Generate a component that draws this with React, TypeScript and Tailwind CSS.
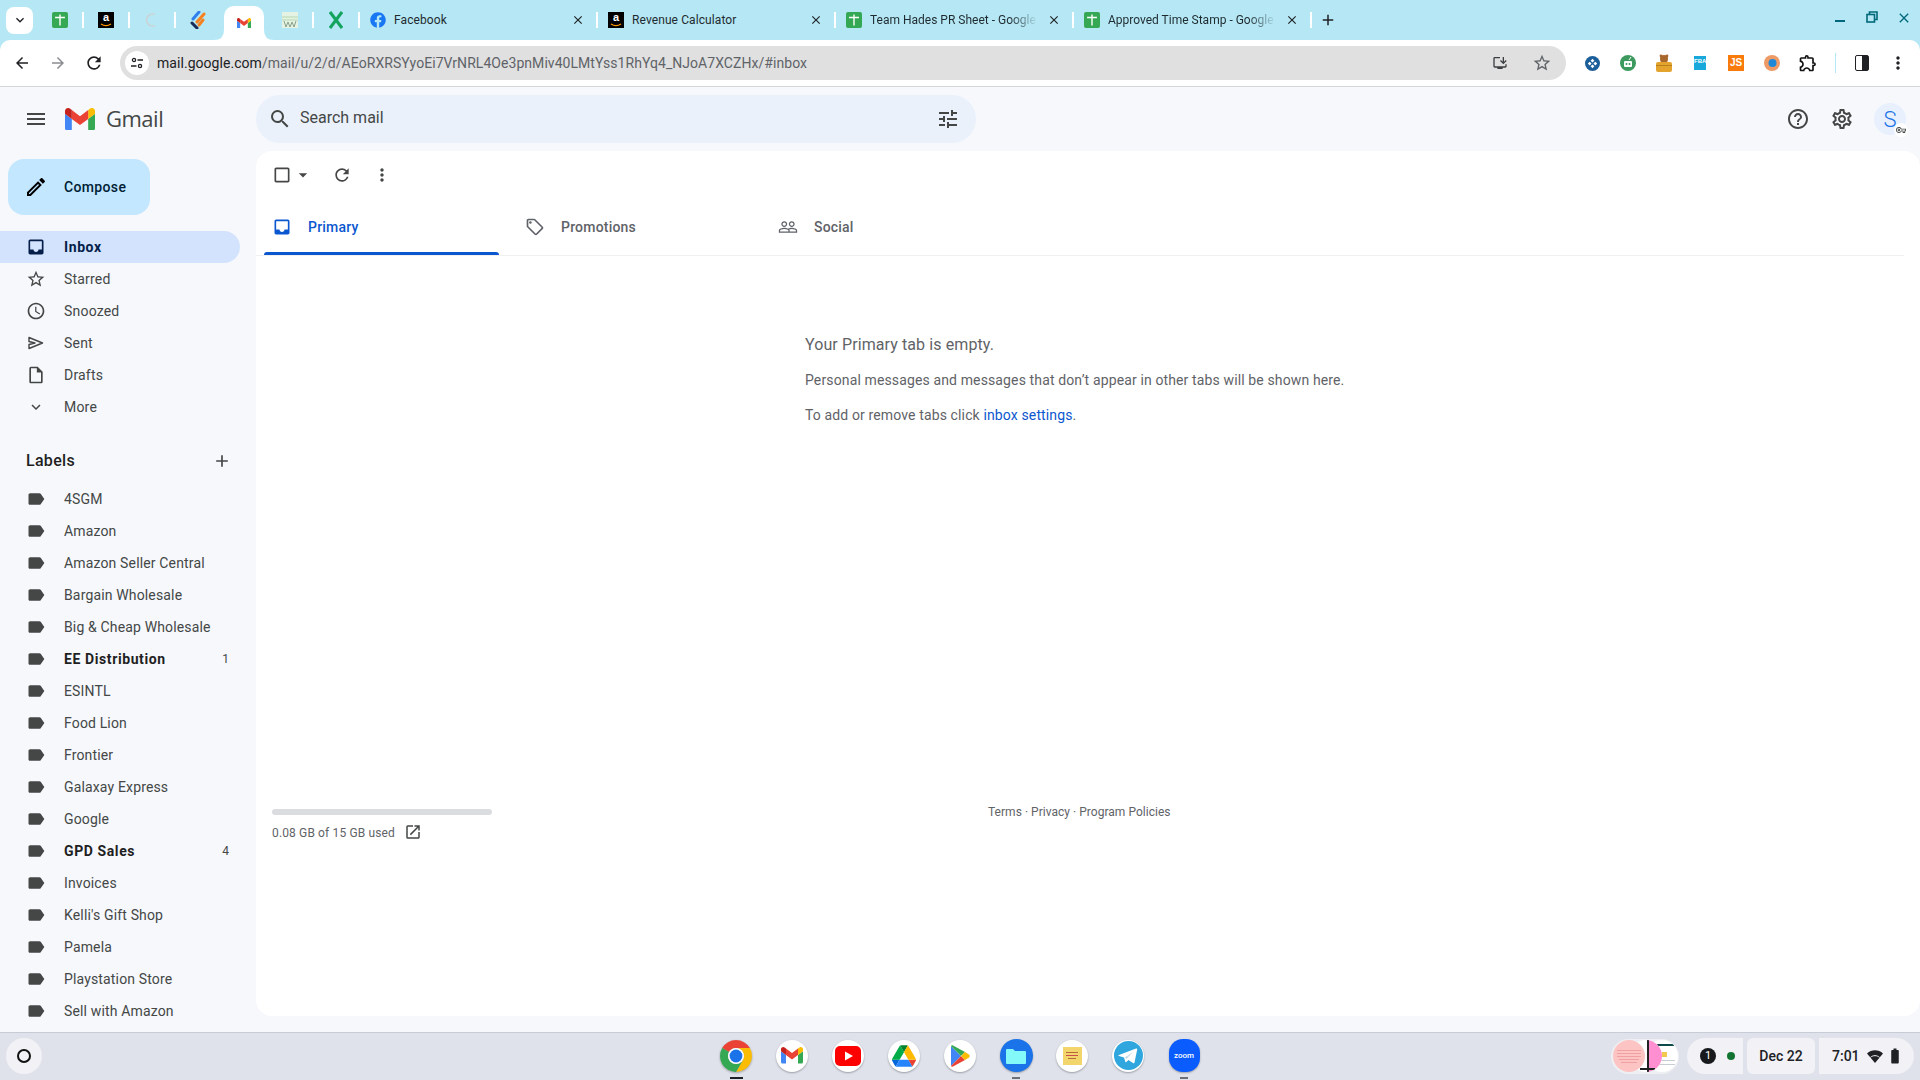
import React from "react";
import {
  MdInbox, MdStarBorder, MdOutlineWatchLater, MdOutlineInsertDriveFile, MdKeyboardArrowDown, MdLabel, MdAdd,
  MdOutlineLocalOffer, MdPeopleOutline, MdCheckBoxOutlineBlank, MdArrowDropDown, MdRefresh, MdMoreVert, MdOpenInNew,
  MdOutlineHelpOutline, MdOutlineSettings, MdSearch, MdTune, MdMenu, MdOutlineEdit, MdArrowBack, MdArrowForward,
  MdClose, MdOutlineExtension, MdOutlineInstallDesktop, MdExpandMore, MdBatteryFull, MdOutlineVpnKey,
} from "react-icons/md";
import { FaFacebook } from "react-icons/fa";

const GmailM = ({ w = 30 }: { w?: number }) => (
  <svg width={w} viewBox="52 42 88 66">
    <path fill="#4285f4" d="M58 108h14V74L52 59v43c0 3.32 2.69 6 6 6" />
    <path fill="#34a853" d="M120 108h14c3.32 0 6-2.69 6-6V59l-20 15" />
    <path fill="#fbbc04" d="M120 48v26l20-15v-8c0-7.42-8.47-11.65-14.4-7.2" />
    <path fill="#ea4335" d="M72 74V48l24 18 24-18v26L96 92" />
    <path fill="#c5221f" d="M52 51v8l20 15V48l-5.6-4.2c-5.94-4.45-14.4-.22-14.4 7.2" />
  </svg>
);

const Sheets = () => (
  <div className="w-4 h-4 rounded-[2px] bg-[#34a853] flex items-center justify-center">
    <svg width="16" height="16" viewBox="0 0 16 16"><path d="M3 5.5h10M8 2.5v11" stroke="#fff" strokeWidth="1.4" /></svg>
  </div>
);

const Amazon = () => (
  <div className="w-4 h-4 bg-black flex flex-col items-center justify-start">
    <span className="text-white text-[11px] leading-[11px] font-bold font-['Liberation_Sans',sans-serif]">a</span>
    <svg width="12" height="4" viewBox="0 0 12 4"><path d="M1 1c3 2 7 2 10 0" stroke="#f90" strokeWidth="1.3" fill="none" /></svg>
  </div>
);

const Sep = ({ hidden }: { hidden?: boolean }) => (
  <div className={`w-[2px] h-4 shrink-0 ${hidden ? "bg-transparent" : "bg-white"}`} />
);

const Pinned = ({ children }: { children: React.ReactNode }) => (
  <div className="w-[44px] h-full shrink-0 flex items-center justify-center">{children}</div>
);

const Tab = ({ icon, title, fade }: { icon: React.ReactNode; title: string; fade?: boolean }) => (
  <div className="w-[236px] shrink-0 h-full flex items-center pl-[10px] pr-[11px]">
    <div className="w-4 shrink-0 flex justify-center">{icon}</div>
    <div
      className={`ml-2 flex-1 min-w-0 whitespace-nowrap text-[12px] text-[#1f2a30] ${
        fade ? "tracking-[0px] [mask-image:linear-gradient(to_right,black_80%,transparent_96%)]" : "tracking-[0.1px]"
      }`}
    >
      {title}
    </div>
    <MdClose className="ml-[2px] shrink-0 text-[#202124]" size={14} />
  </div>
);

const TabStrip = () => (
  <div className="h-10 shrink-0 bg-[#b5e8f4] flex items-center pl-[6px]">
    <div className="w-[27px] h-[27px] mr-[5px] shrink-0 bg-white rounded-lg flex items-center justify-center">
      <MdExpandMore size={16} className="text-[#202124]" />
    </div>
    <Pinned><Sheets /></Pinned>
    <Sep />
    <Pinned><Amazon /></Pinned>
    <Sep />
    <Pinned>
      <svg width="16" height="16" viewBox="0 0 16 16"><path d="M11 2.5a6 6 0 1 0 0 11" stroke="#c9d4d8" strokeWidth="1.6" fill="none" /></svg>
    </Pinned>
    <Sep />
    <Pinned>
      <svg width="16" height="18" viewBox="0 0 16 18">
        <path d="M9 1 3 8" stroke="#2f80ed" strokeWidth="3" strokeLinecap="round" />
        <path d="M14 3 7 11" stroke="#f58220" strokeWidth="3" strokeLinecap="round" />
        <path d="M13 9l-4 5" stroke="#f58220" strokeWidth="3" strokeLinecap="round" />
        <path d="M2 12l5 5" stroke="#172b5a" strokeWidth="3" strokeLinecap="round" />
      </svg>
    </Pinned>
    <Sep hidden />
    <Pinned>
      <div className="relative w-10 h-[34px] self-end bg-white rounded-t-[10px] flex items-center justify-center">
        <GmailM w={14} />
        <svg className="absolute bottom-0 -left-[10px]" width="10" height="10" viewBox="0 0 10 10"><path d="M10 0Q10 10 0 10H10Z" fill="#fff" /></svg>
        <svg className="absolute bottom-0 -right-[10px]" width="10" height="10" viewBox="0 0 10 10"><path d="M0 0Q0 10 10 10H0Z" fill="#fff" /></svg>
      </div>
    </Pinned>
    <Sep hidden />
    <Pinned>
      <svg width="16" height="18" viewBox="0 0 16 18">
        <rect x="0" y="1" width="16" height="16" fill="#e4f3e4" />
        <path d="M0 6h16M0 9h16" stroke="#b7d8b0" strokeWidth="1" />
        <path d="M2 10l2 6 2-5 2 5 2-5 2 5 2-6" stroke="#8aa08a" strokeWidth="1" fill="none" />
      </svg>
    </Pinned>
    <Sep />
    <Pinned>
      <svg width="14" height="18" viewBox="0 0 14 18"><path d="M1 1l12 16M13 1 1 17" stroke="#12a35c" strokeWidth="3" /></svg>
    </Pinned>
    <Sep />
    <Tab icon={<FaFacebook size={16} className="text-[#1877f2]" />} title="Facebook" />
    <Sep />
    <Tab icon={<Amazon />} title="Revenue Calculator" />
    <Sep />
    <Tab icon={<Sheets />} title="Team Hades PR Sheet - Google" fade />
    <Sep />
    <Tab icon={<Sheets />} title="Approved Time Stamp - Google" fade />
    <Sep />
    <MdAdd size={18} className="ml-[7px] text-[#202124]" />
    <div className="ml-auto flex items-start h-full pt-[10px] text-[#00687a]">
      <div className="w-8 h-3 flex items-end justify-center"><div className="w-[10px] h-[2px] bg-[#00687a]" /></div>
      <div className="w-8 h-5 flex items-start justify-center">
        <svg width="12" height="12" viewBox="0 0 12 12" className="mt-[1px]"><path d="M3.5 3.5V1H11v7.5H8.5" stroke="#00687a" strokeWidth="1.6" fill="none" /><rect x="1" y="3.5" width="7.5" height="7.5" stroke="#00687a" strokeWidth="1.6" fill="none" /></svg>
      </div>
      <div className="w-8 h-5 flex items-start justify-center"><MdClose size={16} /></div>
    </div>
  </div>
);

const ToolBtn = ({ children }: { children: React.ReactNode }) => (
  <div className="w-9 h-9 shrink-0 flex items-center justify-center">{children}</div>
);

const BrowserBar = () => (
  <div className="h-[47px] shrink-0 bg-[#b5e8f4]">
    <div className="h-full bg-white rounded-t-[10px] border-b border-[#d4d6d8] flex items-center pl-1 text-[#202124]">
      <ToolBtn><MdArrowBack size={18} /></ToolBtn>
      <ToolBtn><MdArrowForward size={18} className="text-[#8a8d91]" /></ToolBtn>
      <ToolBtn><MdRefresh size={20} /></ToolBtn>
      <div className="ml-2 w-[1446px] shrink-0 h-[34px] bg-[#e0e0e0] rounded-full flex items-center pl-[5px] pr-[14px]">
        <div className="w-6 h-6 bg-white rounded-full flex items-center justify-center">
          <svg width="14" height="14" viewBox="0 0 14 14" fill="none" stroke="#202124" strokeWidth="1.3">
            <circle cx="4" cy="4" r="1.6" /><path d="M7.5 4H13M1 10h5.5" /><circle cx="10" cy="10" r="1.6" />
          </svg>
        </div>
        <div className="ml-2 flex-1 text-[14px] tracking-[0.05px] whitespace-nowrap text-[#5f6368]">
          <span className="text-[#202124]">mail.google.com</span>/mail/u/2/d/AEoRXRSYyoEi7VrNRL4Oe3pnMiv40LMtYss1RhYq4_NJoA7XCZHx/#inbox
        </div>
        <MdOutlineInstallDesktop size={16} className="text-[#3c4043] mr-[24px]" />
        <MdStarBorder size={20} className="text-[#5f6368]" />
      </div>
      <div className="ml-2 flex">
        <ToolBtn>
          <svg width="15" height="15" viewBox="0 0 16 16"><circle cx="8" cy="8" r="8" fill="#1b5e9a" /><path d="M8 3l2 2-2 2-2-2zM8 9l2 2-2 2-2-2zM3 8l2-2 2 2-2 2zM9 8l2-2 2 2-2 2z" fill="#fff" /></svg>
        </ToolBtn>
        <ToolBtn>
          <svg width="16" height="18" viewBox="0 0 16 18"><circle cx="8" cy="9" r="8" fill="#3c9a5f" /><rect x="4" y="7" width="8" height="6" rx="1" fill="#fff" /><circle cx="6.5" cy="10" r="1" fill="#3c9a5f" /><circle cx="9.5" cy="10" r="1" fill="#3c9a5f" /><path d="M9 6l2-3" stroke="#fff" strokeWidth="1" /></svg>
        </ToolBtn>
        <ToolBtn>
          <svg width="16" height="18" viewBox="0 0 16 18"><circle cx="8" cy="5" r="4" fill="#a8672c" /><circle cx="5" cy="2" r="1.4" fill="#a8672c" /><circle cx="11" cy="2" r="1.4" fill="#a8672c" /><rect x="0" y="8" width="16" height="10" rx="2" fill="#e3a32d" /><rect x="0" y="11" width="16" height="1" fill="#b97f1a" /></svg>
        </ToolBtn>
        <ToolBtn>
          <div className="w-3 h-[14px] bg-[#18a8dc] text-white text-[6px] leading-[10px] font-bold text-center font-['Liberation_Sans',sans-serif]">FBA</div>
        </ToolBtn>
        <ToolBtn>
          <div className="w-4 h-4 bg-[#f97b0c] text-white text-[10px] leading-4 font-bold text-center font-['Liberation_Sans',sans-serif]">JS</div>
        </ToolBtn>
        <ToolBtn>
          <svg width="16" height="16" viewBox="0 0 16 16"><circle cx="8" cy="8" r="8" fill="#ee9a66" /><circle cx="8.5" cy="8" r="4" fill="#1e88d8" /></svg>
        </ToolBtn>
        <ToolBtn><MdOutlineExtension size={20} className="text-[#111]" /></ToolBtn>
      </div>
      <div className="ml-[9px] w-px h-5 bg-[#b5e8f4]" />
      <div className="ml-2 flex">
        <ToolBtn>
          <div className="w-[14px] h-4 rounded-[2px] border-[1.5px] border-[#202124] flex justify-end"><div className="w-[6px] h-full bg-[#202124]" /></div>
        </ToolBtn>
        <ToolBtn><MdMoreVert size={20} /></ToolBtn>
      </div>
    </div>
  </div>
);

const GmailHeader = () => (
  <div className="h-16 shrink-0 flex items-center">
    <div className="w-[256px] shrink-0 flex items-center pl-6">
      <MdMenu size={24} className="text-[#444746]" />
      <div className="ml-[17px] flex"><GmailM w={30} /></div>
      <span className="ml-[11px] -mt-[2px] text-[22px] text-[#444746] font-['Open_Sans',sans-serif] tracking-[-0.5px]">Gmail</span>
    </div>
    <div className="w-[720px] h-12 rounded-full bg-[#eaf1fb] flex items-center pl-[12px] pr-[16px] text-[#444746]">
      <MdSearch size={24} />
      <span className="ml-2 flex-1 text-[16px] -mt-[2px]">Search mail</span>
      <MdTune size={24} />
    </div>
    <div className="ml-auto pr-[14px] flex items-center text-[#444746]">
      <MdOutlineHelpOutline size={24} />
      <MdOutlineSettings size={24} className="ml-5" />
      <div className="relative ml-5 w-8 h-8 rounded-full bg-[#e8f0fe] flex items-center justify-center text-[#1a73e8] text-[22px] font-light">
        S
        <div className="absolute -right-[2px] -bottom-[2px] w-[14px] h-[14px] rounded-full bg-white flex items-center justify-center">
          <MdOutlineVpnKey size={10} className="text-[#444746]" />
        </div>
      </div>
    </div>
  </div>
);

const NavRow = ({ icon, label, active }: { icon: React.ReactNode; label: string; active?: boolean }) => (
  <div className={`h-8 w-[240px] rounded-r-full flex items-center pl-[26px] text-[14px] ${active ? "bg-[#d3e3fd] font-bold text-[#041e49]" : "text-[#444746]"}`}>
    <div className="w-5 flex justify-center shrink-0">{icon}</div>
    <span className={`ml-[18px] ${active ? "tracking-[0.6px]" : "tracking-[0.2px]"}`}>{label}</span>
  </div>
);

const labels: [string, string?][] = [
  ["4SGM"], ["Amazon"], ["Amazon Seller Central"], ["Bargain Wholesale"], ["Big & Cheap Wholesale"], ["EE Distribution", "1"],
  ["ESINTL"], ["Food Lion"], ["Frontier"], ["Galaxay Express"], ["Google"], ["GPD Sales", "4"], ["Invoices"], ["Kelli's Gift Shop"],
  ["Pamela"], ["Playstation Store"], ["Sell with Amazon"],
];

const Sidebar = () => (
  <div className="w-[256px] shrink-0 overflow-hidden pt-2 h-full">
    <div className="ml-2 w-[142px] h-14 rounded-2xl bg-[#c2e7ff] flex items-center pl-4 text-[#001d35]">
      <MdOutlineEdit size={24} className="text-black" />
      <span className="ml-4 text-[14px] font-medium tracking-[0.35px]">Compose</span>
    </div>
    <div className="mt-4">
      <NavRow active icon={<MdInbox size={20} className="text-[#041e49]" />} label="Inbox" />
      <NavRow icon={<MdStarBorder size={20} />} label="Starred" />
      <NavRow icon={<MdOutlineWatchLater size={20} />} label="Snoozed" />
      <NavRow
        icon={<svg width="16" height="14" viewBox="0 0 16 14" fill="none" stroke="#444746" strokeWidth="1.4"><path d="M1 1.5 14.5 7 1 12.5V8.5L7 7 1 5.5z" strokeLinejoin="round" /></svg>}
        label="Sent"
      />
      <NavRow icon={<MdOutlineInsertDriveFile size={20} />} label="Drafts" />
      <NavRow icon={<MdKeyboardArrowDown size={18} />} label="More" />
    </div>
    <div className="mt-[19px] mb-[3px] h-[38px] pl-[26px] pr-[24px] flex items-center justify-between text-[#1f1f1f]">
      <span className="text-[16px] font-medium tracking-[0.3px]">Labels</span>
      <MdAdd size={20} className="text-[#444746]" />
    </div>
    <div>
      {labels.map(([l, c]) => (
        <div key={l} className="h-8 w-[240px] flex items-center pl-[26px] pr-[11px] text-[14px] text-[#444746]">
          <MdLabel size={20} className="shrink-0" />
          <span className={`ml-[18px] ${c ? "font-bold text-[#1f1f1f] tracking-[0.6px]" : "tracking-[0.15px]"}`}>{l}</span>
          {c && <span className="ml-auto text-[12px] text-[#444746]">{c}</span>}
        </div>
      ))}
    </div>
  </div>
);

const TabHead = ({ icon, label, active }: { icon: React.ReactNode; label: string; active?: boolean }) => (
  <div className={`relative w-[253px] h-full flex items-center pl-2 text-[14px] font-medium ${active ? "text-[#0b57d0]" : "text-[#5f6368]"}`}>
    <div className="w-5 flex justify-center">{icon}</div>
    <span className="ml-4 tracking-[0.2px]">{label}</span>
    {active && <div className="absolute left-0 bottom-0 w-[235px] h-[3px] bg-[#0b57d0] rounded-t-[3px]" />}
  </div>
);

const Main = () => (
  <div className="flex-1 min-w-0 h-[865px] bg-white rounded-2xl flex flex-col">
    <div className="h-12 shrink-0 flex items-center pl-4 text-[#444746]">
      <MdCheckBoxOutlineBlank size={20} />
      <MdArrowDropDown size={20} className="ml-[1px]" />
      <MdRefresh size={20} className="ml-[19px]" />
      <MdMoreVert size={20} className="ml-[20px]" />
    </div>
    <div className="h-[57px] shrink-0 pl-2 flex border-b border-[#f0f0f0] mr-[16px]">
      <TabHead active icon={<MdInbox size={20} />} label="Primary" />
      <TabHead icon={<MdOutlineLocalOffer size={20} />} label="Promotions" />
      <TabHead icon={<MdPeopleOutline size={20} />} label="Social" />
    </div>
    <div className="flex-1 flex flex-col">
      <div className="pl-[549px] pt-[77px] text-[#5f6368]">
        <div className="text-[16px] leading-6 tracking-[0.1px]">Your Primary tab is empty.</div>
        <div className="mt-[11px] text-[14px] leading-6 tracking-[0.13px]">Personal messages and messages that don’t appear in other tabs will be shown here.</div>
        <div className="mt-[11px] text-[14px] leading-6 tracking-[0.13px]">
          To add or remove tabs click <span className="text-[#0b57d0]">inbox settings</span>.
        </div>
      </div>
      <div className="mt-[382px] flex items-start pl-4">
        <div className="w-[220px] shrink-0">
          <div className="h-[6px] rounded-full bg-[#dadce0]" />
          <div className="mt-[9px] flex items-center text-[12px] text-[#5f6368] leading-[18px] tracking-[0.14px]">
            0.08 GB of 15 GB used
            <MdOpenInNew size={18} className="ml-[9px] -mt-[2px] text-[#444746]" />
          </div>
        </div>
        <div className="ml-[496px] -mt-[6px] text-[12px] leading-[18px] tracking-[0.03px] text-[#5f6368]">Terms · Privacy · Program Policies</div>
      </div>
    </div>
  </div>
);

const DockCircle = ({ children, bar }: { children: React.ReactNode; bar?: "dark" | "gray" }) => (
  <div className="relative w-[56px] h-full shrink-0 flex items-center justify-center pb-[2px]">
    {children}
    {bar && <div className={`absolute bottom-[1px] h-[2px] ${bar === "dark" ? "w-[13px] bg-[#202124]" : "w-2 bg-[#6b6f78]"}`} />}
  </div>
);

const White = ({ children }: { children: React.ReactNode }) => (
  <div className="w-8 h-8 rounded-full bg-white shadow-[0_1px_2px_rgba(0,0,0,0.3)] flex items-center justify-center">{children}</div>
);

const Shelf = () => (
  <div className="h-12 shrink-0 bg-[#dfe2eb] border-t border-[#c8ccd6] flex items-center relative">
    <div className="ml-[6px] mb-[1px] w-9 h-9 rounded-full bg-[#f1f1f6] flex items-center justify-center">
      <div className="w-[14px] h-[14px] rounded-full border-2 border-[#111]" />
    </div>
    <div className="ml-[666px] flex h-full">
      <DockCircle bar="dark">
        <svg width="32" height="32" viewBox="4 4 40 40" className="drop-shadow-[0_1px_1px_rgba(0,0,0,0.3)]">
          <path fill="#EA4335" d="M6.68 14A20 20 0 0 1 41.32 14H24A10 10 0 0 0 15.34 19Z" />
          <path fill="#FBBC04" d="M41.32 14A20 20 0 0 1 24 44L32.66 29A10 10 0 0 0 24 14Z" />
          <path fill="#34A853" d="M6.68 14A20 20 0 0 0 24 44L32.66 29A10 10 0 0 1 15.34 19Z" />
          <circle cx="24" cy="24" r="10" fill="#fff" /><circle cx="24" cy="24" r="8" fill="#1a73e8" />
        </svg>
      </DockCircle>
      <DockCircle><White><GmailM w={22} /></White></DockCircle>
      <DockCircle>
        <White>
          <svg width="26" height="20" viewBox="0 0 26 20"><rect width="26" height="20" rx="5" fill="#f00" /><path d="M10 5.5 18 10l-8 4.5z" fill="#fff" /></svg>
        </White>
      </DockCircle>
      <DockCircle>
        <White>
          <svg width="24" height="22" viewBox="0 0 87.3 78">
            <path d="m6.6 66.85 3.85 6.65c.8 1.4 1.95 2.5 3.3 3.3l13.75-23.8h-27.5c0 1.55.4 3.1 1.2 4.5z" fill="#0066da" />
            <path d="m43.65 25-13.75-23.8c-1.35.8-2.5 1.9-3.3 3.3l-25.4 44a9.06 9.06 0 0 0 -1.2 4.5h27.5z" fill="#00ac47" />
            <path d="m73.55 76.8c1.35-.8 2.5-1.9 3.3-3.3l1.6-2.75 7.65-13.25c.8-1.4 1.2-2.95 1.2-4.5h-27.502l5.852 11.5z" fill="#ea4335" />
            <path d="m43.65 25 13.75-23.8c-1.35-.8-2.9-1.2-4.5-1.2h-18.5c-1.6 0-3.15.45-4.5 1.2z" fill="#00832d" />
            <path d="m59.8 53h-32.3l-13.75 23.8c1.35.8 2.9 1.2 4.5 1.2h50.8c1.6 0 3.15-.45 4.5-1.2z" fill="#2684fc" />
            <path d="m73.4 26.5-12.7-22c-.8-1.4-1.95-2.5-3.3-3.3l-13.75 23.8 16.15 28h27.45c0-1.55-.4-3.1-1.2-4.5z" fill="#ffba00" />
          </svg>
        </White>
      </DockCircle>
      <DockCircle>
        <White>
          <svg width="20" height="22" viewBox="0 0 20 22">
            <path d="M1 1v20l10-10z" fill="#4285f4" />
            <path d="M1 1l10 10 4-4L3 .5C2 0 1.4.3 1 1z" fill="#34a853" />
            <path d="M1 21l10-10 4 4L3 21.5c-1 .5-1.6.2-2-.5z" fill="#ea4335" />
            <path d="M15 7l4 2.5c1 .7 1 2.3 0 3L15 15l-4-4z" fill="#fbbc04" />
          </svg>
        </White>
      </DockCircle>
      <DockCircle bar="gray">
        <div className="w-[33px] h-[33px] rounded-full bg-[#1a73e8] flex items-center justify-center shadow-[0_1px_2px_rgba(0,0,0,0.3)]">
          <svg width="20" height="16" viewBox="0 0 20 16"><path d="M0 2a1 1 0 0 1 1-1h6l2 2h10a1 1 0 0 1 1 1v11a1 1 0 0 1-1 1H1a1 1 0 0 1-1-1z" fill="#84f9f9" /></svg>
        </div>
      </DockCircle>
      <DockCircle>
        <White>
          <div className="w-[19px] h-[18px] bg-[#f3d66b] flex flex-col items-center justify-center gap-[2px]">
            <div className="w-3 h-px bg-[#b56a3a]" /><div className="w-3 h-px bg-[#c94f4f]" /><div className="w-2 h-px bg-[#b56a3a]" />
          </div>
        </White>
      </DockCircle>
      <DockCircle>
        <White>
          <div className="w-[29px] h-[29px] rounded-full bg-[#2fa6de] flex items-center justify-center">
            <svg width="20" height="18" viewBox="0 0 20 18"><path d="M1 8 18 1.5c.8-.3 1.4.2 1.2 1L16.5 15.5c-.2.9-.9 1-1.6.6L10.5 13l-2.2 2.1c-.4.4-.8.3-.9-.2L6 10.5 1 9c-.9-.3-.9-.8 0-1z" fill="#fff" /><path d="M6.8 10.6 15 5l-6.5 7z" fill="#c8daea" /></svg>
          </div>
        </White>
      </DockCircle>
      <DockCircle bar="gray">
        <div className="w-[31px] h-[33px] rounded-[14px] bg-[#0b5cff] flex items-center justify-center text-white text-[8px] font-medium shadow-[0_1px_2px_rgba(0,0,0,0.3)]">zoom</div>
      </DockCircle>
    </div>
    <div className="ml-auto mb-[1px] flex items-center h-[36px] pr-[6px] text-[#202124]">
      <div className="w-[68px] h-[35px] rounded-full bg-[#eeeff3] relative overflow-hidden flex items-center pl-[1px]">
        <div className="absolute right-[1px] w-8 h-8 rounded-full bg-white flex flex-col items-end justify-center gap-[3px] pr-[3px] overflow-hidden">
          <div className="w-5 h-[2px] bg-[#0f4a4a] -mt-[4px] mb-[3px]" /><div className="w-[5px] h-[5px] bg-[#f2c94c] mr-2" /><div className="w-4 h-[1px] bg-[#c8ccd4]" /><div className="w-4 h-[1px] bg-[#c8ccd4]" />
        </div>
        <div className="absolute left-[19px] w-8 h-8 rounded-full bg-white overflow-hidden">
          <div className="absolute left-[17px] top-0 w-[15px] h-full bg-[#ff8fd0]" />
          <div className="absolute left-[17px] top-0 w-[2px] h-full bg-[#222]" />
          <div className="absolute left-[10px] top-[28px] w-[15px] h-[2px] bg-[#222]" />
        </div>
        <div className="relative ml-[1px] w-8 h-8 rounded-full bg-[#fdc4c4] flex flex-col items-center justify-center gap-[2px]">
          <div className="w-6 h-px bg-[#f0a0a0]" /><div className="w-6 h-px bg-[#f0a0a0]" /><div className="w-6 h-px bg-[#f0a0a0]" /><div className="w-5 h-px bg-[#f0a0a0]" /><div className="w-4 h-px bg-[#f0a0a0]" />
        </div>
      </div>
      <div className="ml-2 w-[56px] h-full rounded-l-full rounded-r-[6px] bg-[#f1f1f6] flex items-center pl-[13px]">
        <div className="w-4 h-4 rounded-full bg-[#17191c] text-white text-[11px] leading-4 text-center">1</div>
        <div className="ml-[11px] w-2 h-2 rounded-full bg-[#137333]" />
      </div>
      <div className="ml-1 w-[68px] h-full rounded-[6px] bg-[#f1f1f6] flex items-center justify-center text-[14px] font-medium">Dec 22</div>
      <div className="ml-1 w-[95px] h-full rounded-r-full rounded-l-[6px] bg-[#f1f1f6] flex items-center pl-[13px] text-[14px] font-medium">
        7:01
        <svg width="16" height="13" viewBox="0 0 16 13" className="ml-[7px]">
          <path d="M8 13 0 3.5C4.5-.8 11.5-.8 16 3.5Z" fill="#202124" />
          <path d="M3.5 7.3c2.6-2.2 6.4-2.2 9 0" stroke="#f1f1f6" strokeWidth="1" fill="none" />
        </svg>
        <MdBatteryFull size={18} className="ml-[3px]" />
      </div>
    </div>
  </div>
);

export default function App() {
  return (
    <div className="w-[1920px] h-[1080px] overflow-hidden flex flex-col font-['Roboto',sans-serif] bg-[#f6f8fc]">
      <TabStrip />
      <BrowserBar />
      <div className="flex-1 min-h-0 flex flex-col">
        <GmailHeader />
        <div className="flex-1 min-h-0 flex">
          <Sidebar />
          <Main />
        </div>
      </div>
      <Shelf />
    </div>
  );
}
